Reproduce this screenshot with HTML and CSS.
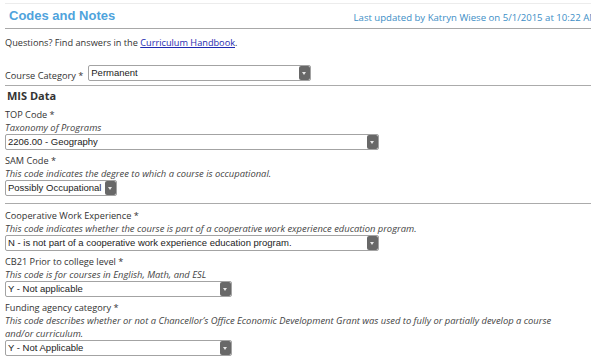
FILE: index.html
```html
<!DOCTYPE html>
<html>
<head>
<meta charset="utf-8">
<link rel="stylesheet" href="styles.css">
</head>
<body>
<div class="page">
  <div class="header">
    <h1 class="title">Codes and Notes</h1>
    <div class="updated">Last updated by Katryn Wiese on 5/1/2015 at 10:22 AM</div>
  </div>
  <p class="intro">Questions? Find answers in the <a href="#" class="link">Curriculum Handbook</a>.</p>
  <div class="inline-field">
    <span class="label">Course Category *</span>
    <div class="select w-cat"><span class="sel-text">Permanent</span><span class="sel-btn"></span></div>
  </div>
  <hr class="rule">
  <h2 class="section">MIS Data</h2>

  <div class="field lead">
    <div class="label">TOP Code *</div>
    <div class="help">Taxonomy of Programs</div>
    <div class="select w-long"><span class="sel-text">2206.00 - Geography</span><span class="sel-btn"></span></div>
  </div>
  <div class="field">
    <div class="label">SAM Code *</div>
    <div class="help">This code indicates the degree to which a course is occupational.</div>
    <div class="select w-sam"><span class="sel-text">Possibly Occupational</span><span class="sel-btn"></span></div>
  </div>
  <hr class="rule rule2">
  <div class="field lead">
    <div class="label">Cooperative Work Experience *</div>
    <div class="help">This code indicates whether the course is part of a cooperative work experience education program.</div>
    <div class="select w-long"><span class="sel-text">N - is not part of a cooperative work experience education program.</span><span class="sel-btn"></span></div>
  </div>
  <div class="field">
    <div class="label">CB21 Prior to college level *</div>
    <div class="help">This code is for courses in English, Math, and ESL</div>
    <div class="select w-mid"><span class="sel-text">Y - Not applicable</span><span class="sel-btn"></span></div>
  </div>
  <div class="field">
    <div class="label">Funding agency category *</div>
    <div class="help">This code describes whether or not a Chancellor’s Office Economic Development Grant was used to fully or partially develop a course<br>and/or curriculum.</div>
    <div class="select w-mid"><span class="sel-text">Y - Not Applicable</span><span class="sel-btn"></span></div>
  </div>
</div>
</body>
</html>
```

FILE: styles.css
```css
html, body {
  margin: 0;
  padding: 0;
  background: #fff;
}
body {
  font-family: "Open Sans", "DejaVu Sans", sans-serif;
  color: #333;
  overflow: hidden;
}
.page {
  width: 591px;
  padding-top: 3px;
}
.header {
  margin-left: 5px;
  border-top: 1px solid #ececec;
  border-bottom: 1px solid #a8a8a8;
  height: 24px;
  display: flex;
  align-items: center;
  justify-content: space-between;
  white-space: nowrap;
  overflow: hidden;
}
.title {
  margin: 0 0 0 4px;
  font-family: "Liberation Sans", Arial, sans-serif;
  font-size: 13px;
  font-weight: bold;
  color: #4fa3dc;
  line-height: 24px;
}
.updated {
  font-size: 9.6px;
  color: #3c8ec6;
  margin-right: -7px;
  padding-top: 2px;
}
.intro {
  margin: 7px 0 0 5px;
  font-size: 9.2px;
  line-height: 14px;
}
.link {
  color: #1e2ab0;
  text-decoration: underline;
}
.inline-field {
  margin: 15px 0 0 5px;
  display: flex;
  align-items: center;
  gap: 5px;
  height: 16px;
}
.label {
  font-size: 9.2px;
  line-height: 13px;
  color: #333;
  white-space: nowrap;
}
.inline-field .label {
  padding-top: 4px;
}
.rule {
  margin: 4px 0 0 5px;
  border: 0;
  border-top: 1px solid #ababab;
  height: 0;
}
.rule2 {
  margin-top: 7px;
}
.section {
  margin: 3px 0 0 7px;
  font-size: 11px;
  font-weight: bold;
  line-height: 14px;
  color: #333;
}
.field {
  margin: 4px 0 0 5px;
}
.field.lead {
  margin-top: 5px;
}
.help {
  font-size: 9.4px;
  font-style: italic;
  line-height: 13px;
  color: #444;
  white-space: nowrap;
}
.select {
  box-sizing: border-box;
  height: 16px;
  border: 1px solid #a3a3a3;
  border-radius: 2px;
  background: #fff;
  display: flex;
  align-items: stretch;
  justify-content: space-between;
  font-family: "Liberation Sans", Arial, sans-serif;
  font-size: 9.5px;
  font-weight: normal;
  color: #222;
}
.sel-text {
  padding-left: 2px;
  line-height: 14px;
  white-space: nowrap;
}
.sel-btn {
  width: 11px;
  background: #686868;
  border-radius: 2px;
  position: relative;
  flex: none;
}
.sel-btn::after {
  content: "";
  position: absolute;
  left: 3px;
  top: 6px;
  border-left: 2.5px solid transparent;
  border-right: 2.5px solid transparent;
  border-top: 3px solid #e8e8e8;
}
.w-cat { width: 223px; }
.w-long { width: 374px; }
.w-sam { width: 112px; }
.w-mid { width: 227px; }
```
